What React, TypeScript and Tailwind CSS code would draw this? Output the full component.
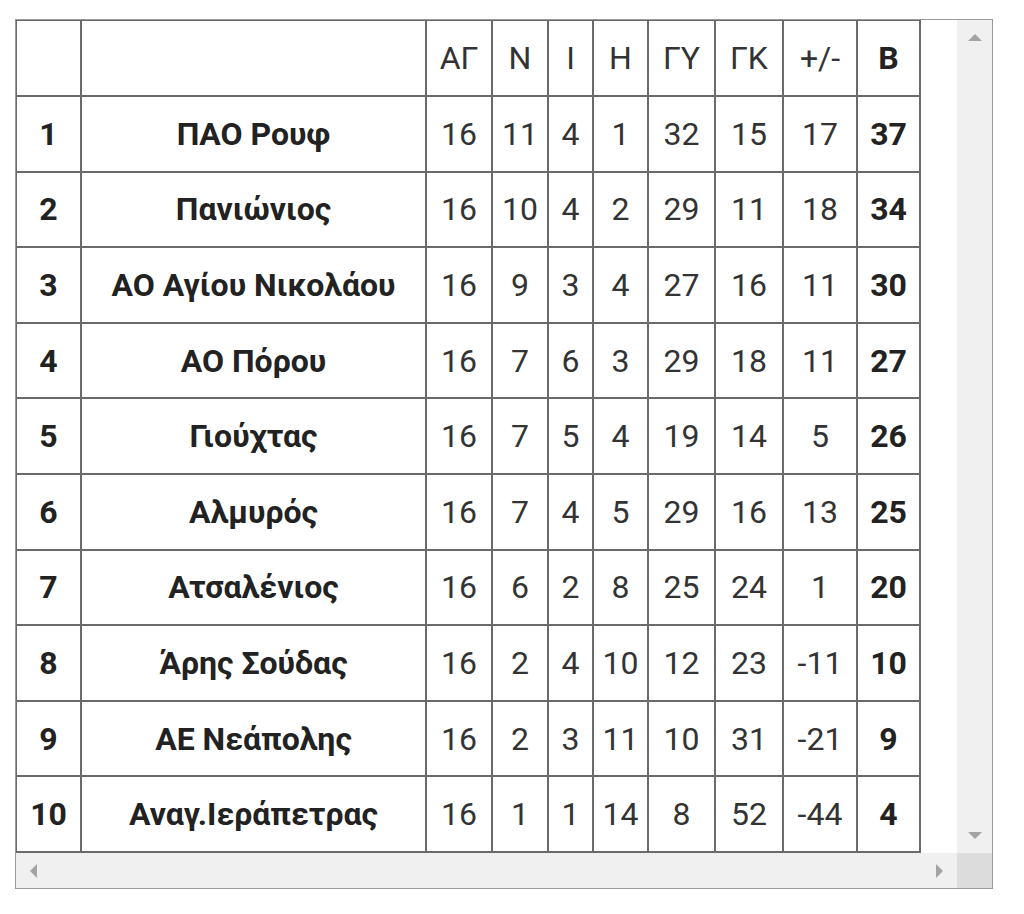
const header = ["ΑΓ", "Ν", "Ι", "Η", "ΓΥ", "ΓΚ", "+/-"];

const rows: [number, string, number, number, number, number, number, number, number, number][] = [
  [1, "ΠΑΟ Ρουφ", 16, 11, 4, 1, 32, 15, 17, 37],
  [2, "Πανιώνιος", 16, 10, 4, 2, 29, 11, 18, 34],
  [3, "ΑΟ Αγίου Νικολάου", 16, 9, 3, 4, 27, 16, 11, 30],
  [4, "ΑΟ Πόρου", 16, 7, 6, 3, 29, 18, 11, 27],
  [5, "Γιούχτας", 16, 7, 5, 4, 19, 14, 5, 26],
  [6, "Αλμυρός", 16, 7, 4, 5, 29, 16, 13, 25],
  [7, "Ατσαλένιος", 16, 6, 2, 8, 25, 24, 1, 20],
  [8, "Άρης Σούδας", 16, 2, 4, 10, 12, 23, -11, 10],
  [9, "ΑΕ Νεάπολης", 16, 2, 3, 11, 10, 31, -21, 9],
  [10, "Αναγ.Ιεράπετρας", 16, 1, 1, 14, 8, 52, -44, 4],
];

const widths = [65, 345, 66, 56, 45, 55, 67, 68, 74, 63];

const cell = "border-2 border-[#6a6a6a] text-center p-0 text-[32px] leading-none";

export default function App() {
  return (
    <div className="min-h-[914px] bg-white pt-[19px] pl-[15px] font-['Roboto',sans-serif]">
      <div className="w-[978px] h-[870px] border border-[#9a9a9a] grid grid-cols-[941px_35px] grid-rows-[833px_35px]">
        {/* scrolling content */}
        <div className="bg-white overflow-hidden">
          <table className="table-fixed border-collapse w-[905px] -ml-px -mt-px">
            <colgroup>
              {widths.map((w, i) => (
                <col key={i} style={{ width: w }} />
              ))}
            </colgroup>
            <thead>
              <tr className="h-[76px]">
                <th className={cell}></th>
                <th className={cell}></th>
                {header.map((h) => (
                  <th key={h} className={`${cell} font-normal text-[#333]`}>
                    {h}
                  </th>
                ))}
                <th className={`${cell} font-bold text-[#222]`}>Β</th>
              </tr>
            </thead>
            <tbody>
              {rows.map((r) => (
                <tr key={r[0]} className="h-[75.6px]">
                  <td className={`${cell} font-bold text-[#222]`}>{r[0]}</td>
                  <td className={`${cell} font-bold text-[#222] whitespace-nowrap`}>{r[1]}</td>
                  {r.slice(2, 9).map((v, i) => (
                    <td key={i} className={`${cell} text-[#333]`}>
                      {v}
                    </td>
                  ))}
                  <td className={`${cell} font-bold text-[#222]`}>{r[9]}</td>
                </tr>
              ))}
            </tbody>
          </table>
        </div>

        {/* vertical scrollbar */}
        <div className="bg-[#f0f0f0] flex flex-col items-center justify-between pt-[14px] pb-[14px]">
          <div className="w-0 h-0 border-l-[7px] border-r-[7px] border-b-[7px] border-l-transparent border-r-transparent border-b-[#a3a3a3]" />
          <div className="w-0 h-0 border-l-[7px] border-r-[7px] border-t-[7px] border-l-transparent border-r-transparent border-t-[#a3a3a3]" />
        </div>

        {/* horizontal scrollbar */}
        <div className="bg-[#f0f0f0] flex items-center justify-between pl-[14px] pr-[14px]">
          <div className="w-0 h-0 border-t-[7px] border-b-[7px] border-r-[7px] border-t-transparent border-b-transparent border-r-[#a3a3a3]" />
          <div className="w-0 h-0 border-t-[7px] border-b-[7px] border-l-[7px] border-t-transparent border-b-transparent border-l-[#a3a3a3]" />
        </div>

        {/* corner */}
        <div className="bg-[#dcdcdc]" />
      </div>
    </div>
  );
}
